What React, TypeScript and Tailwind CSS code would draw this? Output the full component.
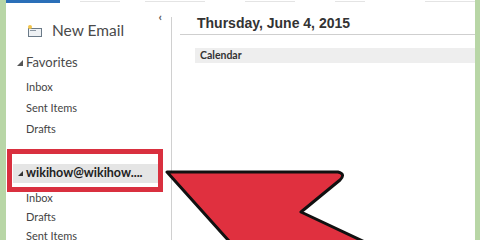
import React from "react";

export default function App() {
  const sideItem = "h-[21px] flex items-center pl-[20px] text-[11px] text-[#444]";
  const lowItem = "h-[19px] flex items-center pl-[20px] text-[11px] text-[#444]";
  return (
    <div className="relative w-[480px] h-[240px] overflow-hidden bg-white flex" style={{ fontFamily: 'Lato, "Open Sans", sans-serif' }}>
      <div className="w-[6px] bg-[#b8d6a6] shrink-0" />
      <div className="flex-1 flex flex-col">
        <div className="h-[4px] flex items-start">
          <div className="w-[54px] h-[3px] bg-[#2a6fb8]" />
          <div className="ml-[20px] mt-[1px] w-[40px] h-[1px] bg-[#e4e4e4]" />
          <div className="ml-[25px] mt-[1px] w-[60px] h-[1px] bg-[#e4e4e4]" />
          <div className="ml-[40px] mt-[1px] w-[50px] h-[1px] bg-[#e4e4e4]" />
          <div className="ml-[40px] mt-[1px] w-[30px] h-[1px] bg-[#e4e4e4]" />
          <div className="ml-[60px] mt-[1px] w-[50px] h-[1px] bg-[#e4e4e4]" />
        </div>
        <div className="flex-1 flex">
          <div className="w-[165px] shrink-0 flex flex-col">
            <div className="h-[16px] flex justify-end pr-[9px] pt-[8px]">
              <span className="text-[12px] leading-none text-[#555] font-bold">‹</span>
            </div>
            <div className="flex items-center h-[24px] pl-[21px] gap-[9px]">
              <svg width="16" height="12" viewBox="0 0 16 12">
                <rect x="1.5" y="3.5" width="13" height="8" fill="#eef1f4" stroke="#6b7a88" />
                <path d="M3 5.5h6" stroke="#8a96a2" />
                <circle cx="3" cy="2" r="2" fill="#f3c44a" />
              </svg>
              <span className="text-[15.5px] text-[#4a4a4a]">New Email</span>
            </div>
            <div className="h-[10px]" />
            <div className="h-[20px] flex items-center pl-[11px] gap-[3px] text-[13px] text-[#4a4a4a]">
              <svg width="6" height="6" viewBox="0 0 6 6"><path d="M6 0V6H0Z" fill="#555" /></svg>
              <span>Favorites</span>
            </div>
            <div className="h-[4px]" />
            <div className={sideItem}>Inbox</div>
            <div className={sideItem}>Sent Items</div>
            <div className={sideItem}>Drafts</div>
            <div className="h-[24px]" />
            <div className="ml-[7px] mr-[13px] h-[19px] bg-[#e5e5e5] flex items-center pl-[5px] gap-[3px]">
              <svg width="5" height="5" viewBox="0 0 6 6"><path d="M6 0V6H0Z" fill="#333" /></svg>
              <span className="text-[12.5px] font-bold text-[#222]">wikihow@wikihow....</span>
            </div>
            <div className="h-[6px]" />
            <div className={lowItem}>Inbox</div>
            <div className={lowItem}>Drafts</div>
            <div className={lowItem}>Sent Items</div>
          </div>
          <div className="flex-1 flex">
            <div className="w-[1px] bg-[#d0d0d0] mt-[14px]" />
            <div className="flex-1 flex flex-col pl-[8px]">
              <div className="h-[31px] flex items-end pl-[17px] pb-[3px]">
                <span className="text-[14px] leading-[16px] font-bold text-[#333]" style={{ fontFamily: '"Liberation Sans", Arial, sans-serif' }}>Thursday, June 4, 2015</span>
              </div>
              <div className="h-[1px] bg-[#cfcfcf]" />
              <div className="h-[13px]" />
              <div className="ml-[15px] h-[15px] bg-[#eeeeee] flex items-center pl-[5px]">
                <span className="text-[10.5px] font-bold text-[#333]">Calendar</span>
              </div>
            </div>
          </div>
        </div>
      </div>
      <div className="w-[5px] bg-[#b8d6a6] shrink-0" />
      <div className="absolute left-[7px] top-[149px] w-[156px] h-[43px] border-[5px] border-[#d9303f]" />
      <svg className="absolute left-0 top-0" width="480" height="240" viewBox="0 0 480 240">
        <path d="M167 172 L338 172 Q346 174 340 180 L301 212 L403 260 L246 260 Z" fill="#e0303f" stroke="#111" strokeWidth="3" strokeLinejoin="round" />
      </svg>
    </div>
  );
}
